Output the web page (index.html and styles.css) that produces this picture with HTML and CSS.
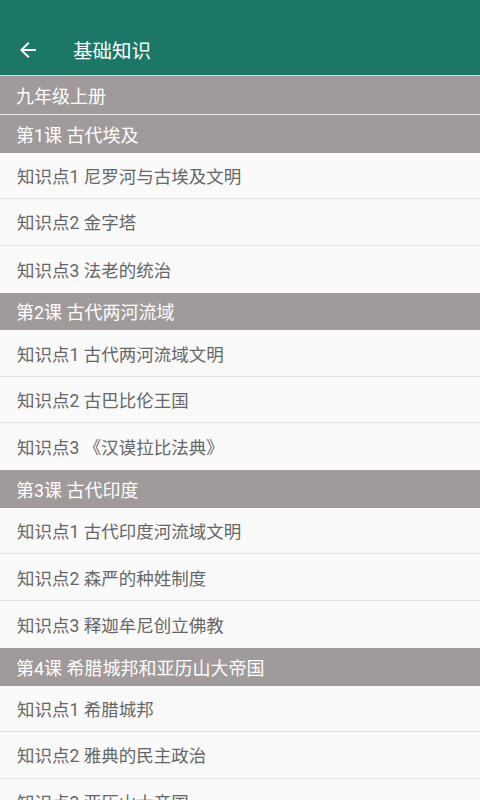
FILE: index.html
```html
<!DOCTYPE html>
<html lang="zh">
<head>
<meta charset="utf-8">
<title>基础知识</title>
<link rel="stylesheet" href="styles.css">
</head>
<body>
<div class="app">
  <header class="toolbar">
    <svg class="back" viewBox="0 0 24 24" width="24" height="24"><path d="M20 11H7.83l5.59-5.59L12 4l-8 8 8 8 1.41-1.41L7.83 13H20v-2z" fill="#fff"/></svg>
    <span class="title">基础知识</span>
  </header>
  <div class="list">
    <div class="grade">九年级上册</div>
    <div class="chapter">第1课 古代埃及</div>
    <div class="item">知识点1 尼罗河与古埃及文明</div>
    <div class="item">知识点2 金字塔</div>
    <div class="item">知识点3 法老的统治</div>
    <div class="chapter">第2课 古代两河流域</div>
    <div class="item">知识点1 古代两河流域文明</div>
    <div class="item">知识点2 古巴比伦王国</div>
    <div class="item">知识点3 《汉谟拉比法典》</div>
    <div class="chapter">第3课 古代印度</div>
    <div class="item">知识点1 古代印度河流域文明</div>
    <div class="item">知识点2 森严的种姓制度</div>
    <div class="item">知识点3 释迦牟尼创立佛教</div>
    <div class="chapter">第4课 希腊城邦和亚历山大帝国</div>
    <div class="item">知识点1 希腊城邦</div>
    <div class="item">知识点2 雅典的民主政治</div>
    <div class="item">知识点3 亚历山大帝国</div>
  </div>
</div>
</body>
</html>
```
FILE: styles.css
```css
html, body {
  margin: 0;
  padding: 0;
  background: #fafafa;
}
body {
  font-family: Roboto, "Noto Sans CJK SC", sans-serif;
  width: 480px;
  height: 800px;
  overflow: hidden;
}
.toolbar {
  box-sizing: content-box;
  height: 51px;
  padding: 24px 0 0 16px;
  background: #1b7766;
  border-bottom: 1px solid #dcdcdc;
  display: flex;
  align-items: center;
}
.back {
  width: 24px;
  height: 24px;
}
.title {
  color: #fff;
  font-size: 19.5px;
  margin-left: 33px;
}
.list {
  display: flex;
  flex-direction: column;
}
.grade, .chapter {
  background: #a09a9a;
  color: #fff;
  font-size: 18px;
  padding-left: 16px;
  display: flex;
  align-items: center;
}
.grade {
  height: 38px;
  border-bottom: 1px solid #e6e6e6;
}
.chapter {
  height: 37.67px;
}
.item {
  height: 45.5px;
  border-bottom: 1px solid #e0e0e0;
  color: #666;
  font-size: 17.5px;
  padding-left: 17px;
  display: flex;
  align-items: center;
  background: #fafafa;
}
.item:has(+ .chapter) {
  border-bottom: none;
  height: 47px;
}
```
